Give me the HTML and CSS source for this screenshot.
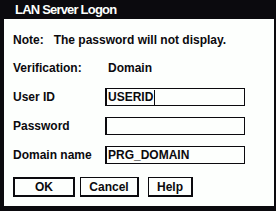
FILE: index.html
```html
<!DOCTYPE html>
<html>
<head>
<meta charset="utf-8">
<link rel="stylesheet" href="styles.css">
</head>
<body>
<div class="window">
  <div class="titlebar">LAN Server Logon</div>
  <div class="client">
    <div class="note">Note:&nbsp;&nbsp; The password will not display.</div>
    <div class="form">
      <div class="label verif">Verification:</div>
      <div class="value verif">Domain</div>
      <div class="label">User ID</div>
      <div class="field"><span>USERID</span><span class="caret"></span></div>
      <div class="label">Password</div>
      <div class="field"></div>
      <div class="label">Domain name</div>
      <div class="field"><span>PRG_DOMAIN</span></div>
    </div>
    <div class="buttons">
      <div class="btn default">OK</div>
      <div class="btn cancel">Cancel</div>
      <div class="btn help">Help</div>
    </div>
  </div>
</div>
</body>
</html>
```
FILE: styles.css
```css
html, body {
  margin: 0;
  padding: 0;
  background: #0b0a0e;
}
body {
  width: 276px;
  height: 211px;
  overflow: hidden;
  font-family: "Liberation Sans", Arial, sans-serif;
  color: #0b0a0e;
}
.window {
  display: flex;
  flex-direction: column;
  width: 276px;
  height: 211px;
}
.titlebar {
  height: 19px;
  line-height: 20px;
  padding-left: 15px;
  color: #fdfffd;
  font-size: 13px;
  font-weight: bold;
  letter-spacing: -0.8px;
}
.client {
  margin: 0 2px 5px 4px;
  height: 187px;
  background: #fdfffd;
  padding-left: 9px;
  box-sizing: border-box;
  font-size: 12px;
  font-weight: bold;
}
.note {
  margin-top: 14px;
  height: 14px;
  line-height: 14px;
}
.form {
  display: grid;
  grid-template-columns: 92px 140px;
  row-gap: 11px;
  align-items: center;
  margin-top: 14px;
}
.verif {
  height: 14px;
  line-height: 14px;
  margin-bottom: 2px;
}
.value {
  padding-left: 3px;
}
.field {
  height: 18px;
  box-sizing: border-box;
  border: 1px solid #0b0a0e;
  border-left-width: 2px;
  display: flex;
  align-items: center;
  padding-left: 1px;
}
.caret {
  width: 1px;
  height: 15px;
  background: #0b0a0e;
  margin-left: 1px;
}
.buttons {
  display: flex;
  gap: 5px;
  margin-top: 13px;
}
.btn {
  height: 20px;
  box-sizing: border-box;
  border: 1px solid #0b0a0e;
  border-right-width: 2px;
  border-bottom-width: 2px;
  display: flex;
  align-items: center;
  justify-content: center;
}
.btn.default {
  width: 62px;
  border-width: 2px;
}
.btn.cancel {
  width: 59px;
}
.btn.help {
  width: 45px;
  margin-left: 4px;
}
```
